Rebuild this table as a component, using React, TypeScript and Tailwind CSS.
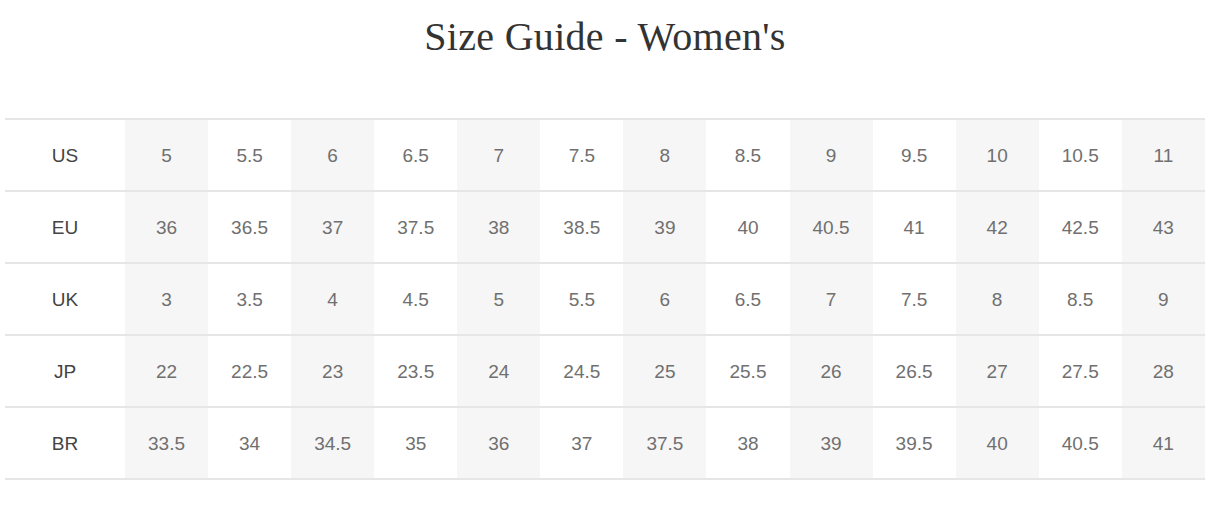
import React from "react";

const rows: { label: string; sizes: string[] }[] = [
  { label: "US", sizes: ["5", "5.5", "6", "6.5", "7", "7.5", "8", "8.5", "9", "9.5", "10", "10.5", "11"] },
  { label: "EU", sizes: ["36", "36.5", "37", "37.5", "38", "38.5", "39", "40", "40.5", "41", "42", "42.5", "43"] },
  { label: "UK", sizes: ["3", "3.5", "4", "4.5", "5", "5.5", "6", "6.5", "7", "7.5", "8", "8.5", "9"] },
  { label: "JP", sizes: ["22", "22.5", "23", "23.5", "24", "24.5", "25", "25.5", "26", "26.5", "27", "27.5", "28"] },
  { label: "BR", sizes: ["33.5", "34", "34.5", "35", "36", "37", "37.5", "38", "39", "39.5", "40", "40.5", "41"] },
];

const App = () => {
  return (
    <div className="bg-white w-[1228px] h-[506px] overflow-hidden">
      <h1 className="text-center pt-[14px] text-[40px] leading-[46px] tracking-[0.3px] text-[#333] font-['Liberation_Serif',serif] ml-[5px] w-[1200px]">
        Size Guide - Women's
      </h1>

      <table className="mt-[58px] ml-[5px] w-[1200px] border-collapse font-['Liberation_Sans',Arial,sans-serif] text-[19px] table-fixed">
        <colgroup>
          <col className="w-[120px]" />
          {rows[0].sizes.map((_, i) => (
            <col key={i} className={i % 2 === 0 ? "bg-[#f6f6f6]" : ""} />
          ))}
        </colgroup>
        <tbody>
          {rows.map((row) => (
            <tr key={row.label} className="border-y-2 border-[#e6e6e6] h-[72px]">
              <td className="text-center text-[#444] pt-[2px]">{row.label}</td>
              {row.sizes.map((s, i) => (
                <td key={i} className="text-center text-[#707070] pt-[2px]">
                  {s}
                </td>
              ))}
            </tr>
          ))}
        </tbody>
      </table>
    </div>
  );
};

export default App;
